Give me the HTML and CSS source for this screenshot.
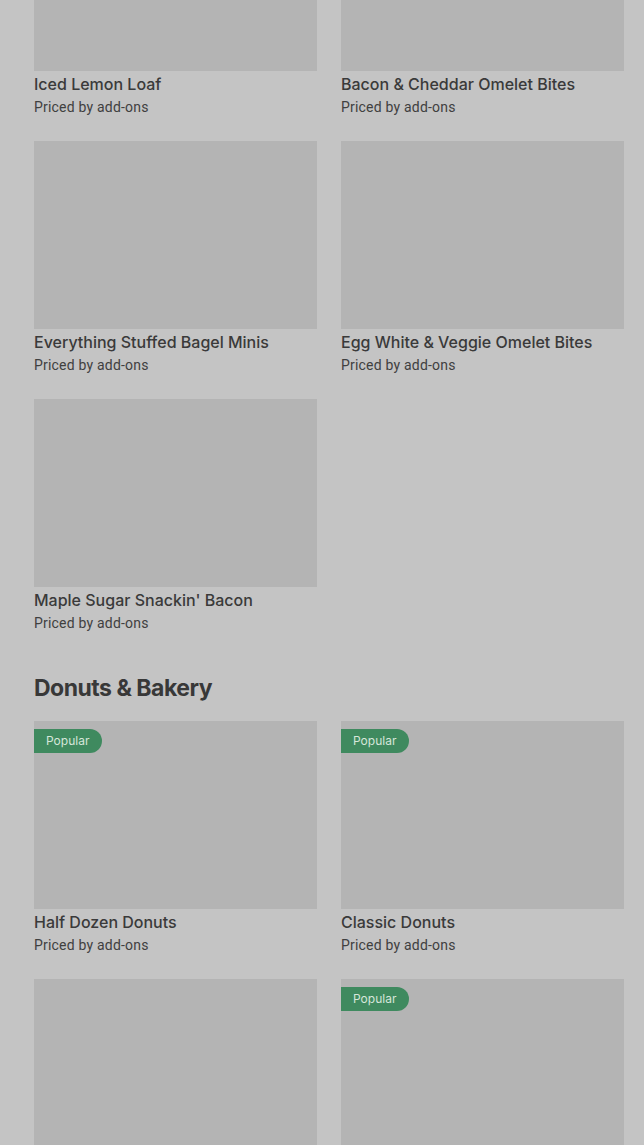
FILE: index.html
```html
<!DOCTYPE html>
<html lang="en">
<head>
    <meta charset="UTF-8">
    <meta name="viewport" content="width=device-width, initial-scale=1.0">
    <title>Menu</title>
    <link rel="stylesheet" href="styles.css">
</head>
<body>
    <div class="menu">
        <div class="grid">
            <div class="item">
                <div class="photo"></div>
                <p class="name">Iced Lemon Loaf</p>
                <p class="price">Priced by add-ons</p>
            </div>
            <div class="item">
                <div class="photo"></div>
                <p class="name">Bacon &amp; Cheddar Omelet Bites</p>
                <p class="price">Priced by add-ons</p>
            </div>
            <div class="item">
                <div class="photo"></div>
                <p class="name">Everything Stuffed Bagel Minis</p>
                <p class="price">Priced by add-ons</p>
            </div>
            <div class="item">
                <div class="photo"></div>
                <p class="name">Egg White &amp; Veggie Omelet Bites</p>
                <p class="price">Priced by add-ons</p>
            </div>
            <div class="item">
                <div class="photo"></div>
                <p class="name">Maple Sugar Snackin' Bacon</p>
                <p class="price">Priced by add-ons</p>
            </div>
        </div>

        <h2 class="section-title">Donuts &amp; Bakery</h2>

        <div class="grid">
            <div class="item">
                <div class="photo"><span class="badge">Popular</span></div>
                <p class="name">Half Dozen Donuts</p>
                <p class="price">Priced by add-ons</p>
            </div>
            <div class="item">
                <div class="photo"><span class="badge">Popular</span></div>
                <p class="name">Classic Donuts</p>
                <p class="price">Priced by add-ons</p>
            </div>
            <div class="item">
                <div class="photo"></div>
            </div>
            <div class="item">
                <div class="photo"><span class="badge">Popular</span></div>
            </div>
        </div>
    </div>
</body>
</html>
```

FILE: styles.css
```css
body {
    margin: 0;
    background-color: #c4c4c4;
    font-family: 'Inter', 'Liberation Sans', sans-serif;
    color: #3b3b3b;
    overflow: hidden;
}
.menu {
    padding: 0 20px 0 34px;
    margin-top: -117px;
}
.grid {
    display: grid;
    grid-template-columns: 1fr 1fr;
    column-gap: 24px;
    row-gap: 24px;
}
.item {
    display: flex;
    flex-direction: column;
}
.photo {
    position: relative;
    height: 188px;
    background-color: #b4b4b4;
}
.badge {
    position: absolute;
    top: 8px;
    left: 0;
    height: 24px;
    line-height: 24px;
    padding: 0 13px 0 12px;
    font-size: 12px;
    color: #d6e6da;
    background-color: #3f8a5f;
    border-radius: 0 12px 12px 0;
}
.name {
    margin: 3px 0 0;
    font-size: 16px;
    font-weight: 500;
    line-height: 20px;
    color: #3a3a3a;
}
.price {
    margin: 3px 0 0;
    font-family: 'Roboto', sans-serif;
    font-size: 14px;
    line-height: 20px;
    letter-spacing: 0.2px;
    color: #404040;
}
.section-title {
    margin: 41px 0 19px;
    font-size: 23px;
    font-weight: 700;
    line-height: 28px;
    letter-spacing: -0.5px;
    color: #383838;
}
```
